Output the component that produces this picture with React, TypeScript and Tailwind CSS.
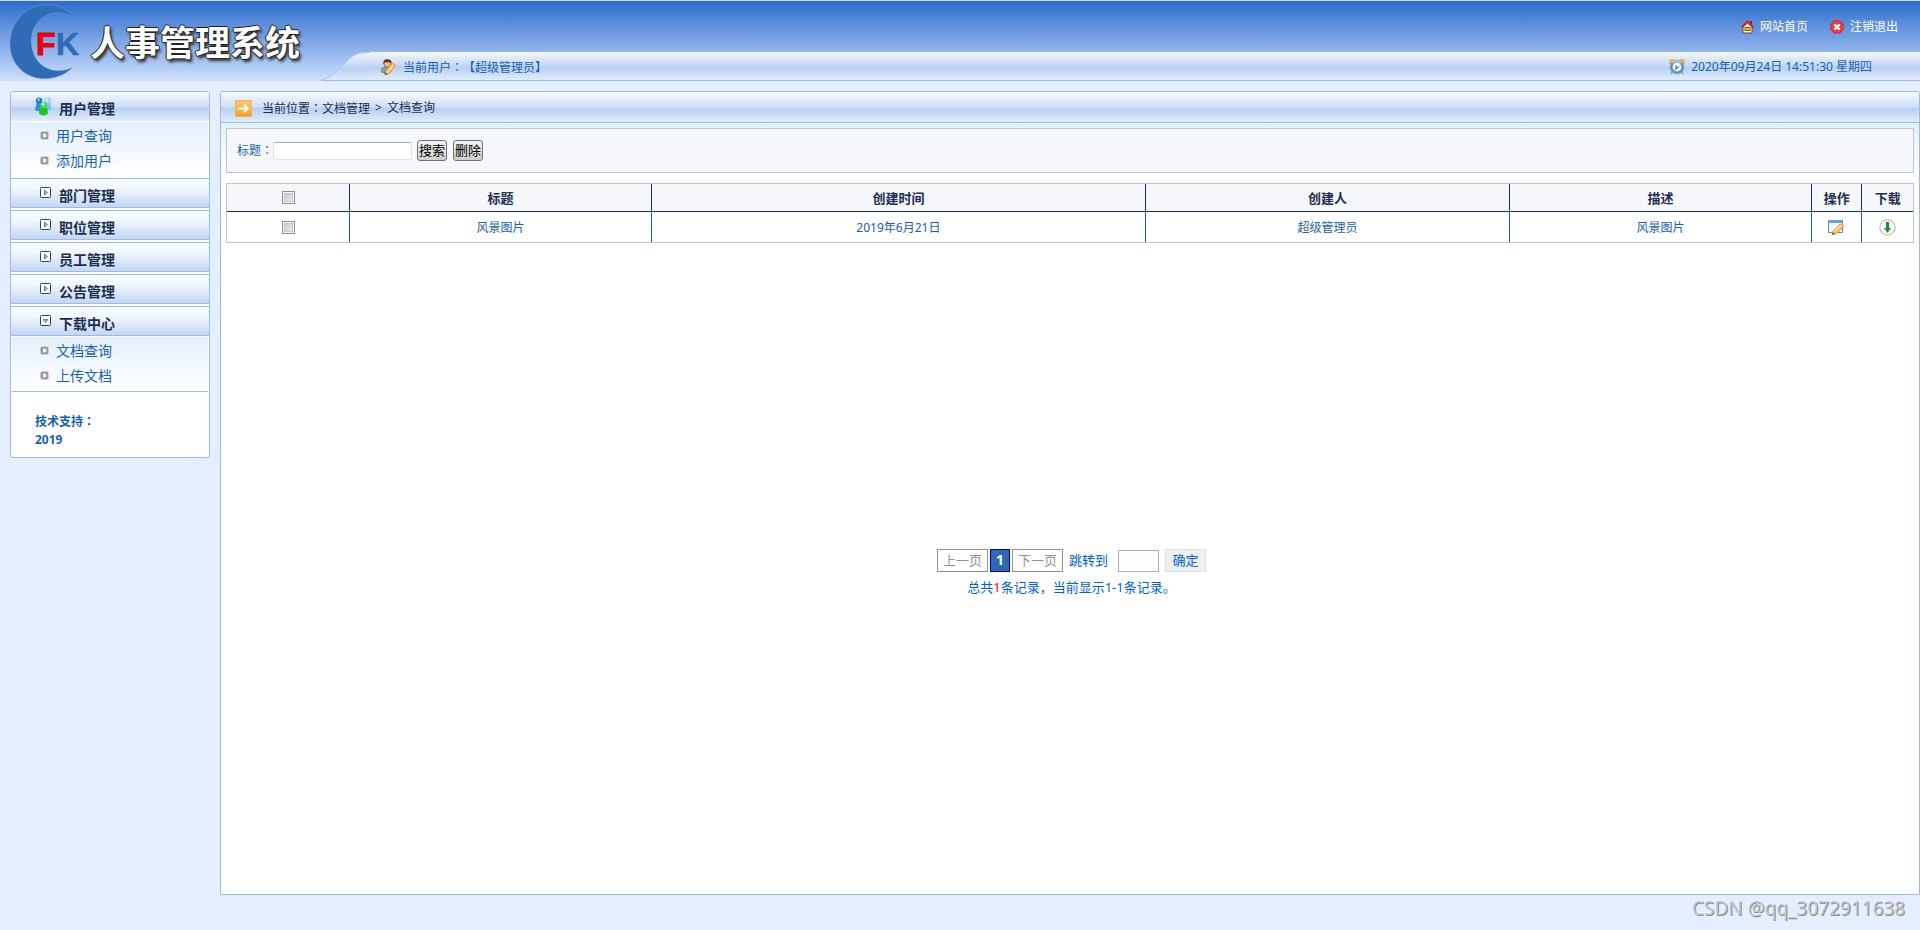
import { useState } from 'react';

interface MenuGroup {
  title: string;
  icon: 'users' | 'closed' | 'open';
  items: string[];
}

const MENU: MenuGroup[] = [
  { title: '用户管理', icon: 'users', items: ['用户查询', '添加用户'] },
  { title: '部门管理', icon: 'closed', items: [] },
  { title: '职位管理', icon: 'closed', items: [] },
  { title: '员工管理', icon: 'closed', items: [] },
  { title: '公告管理', icon: 'closed', items: [] },
  { title: '下载中心', icon: 'open', items: ['文档查询', '上传文档'] },
];

const COLUMNS = [
  { label: '标题', width: 'w-[17.9%]' },
  { label: '创建时间', width: 'w-[29.3%]' },
  { label: '创建人', width: 'w-[21.6%]' },
  { label: '描述', width: 'w-[17.9%]' },
  { label: '操作', width: 'w-[3%]' },
  { label: '下载', width: 'w-[3%]' },
];

const DOCUMENTS = [
  { id: 1, title: '风景图片', created: '2019年6月21日', author: '超级管理员', remark: '风景图片' },
];

const checkboxClass =
  'block mx-auto size-[13px] appearance-none border border-[#8e8f8f] bg-linear-to-br from-[#b8bec6] to-[#f6f6f6] shadow-[inset_0_0_0_1px_#f4f4f4,inset_0_0_0_2px_#c4c8cd] checked:from-[#1c5db3] checked:to-[#4a8be0]';

// Colon centred in its full-width box
function Colon() {
  return <span className="font-['Noto_Sans_CJK_TC',sans-serif]" lang="zh-TW">：</span>;
}

function Logo() {
  return (
    <svg width="84" height="80" viewBox="0 0 84 80" className="shrink-0">
      <path d="M74.500 16.500 C63 2 41 -0.500 26 10.500 C8 23 5 51 18 65.500 C31 82 58 81 72.500 66.500 C58 73 44 69 37 59 C28.500 47 29 29 40 18.500 C49 10.500 63 9 74.500 16.500 Z" fill="#2f6cb5" stroke="#6f9bd3" strokeWidth="0.500" />
      <text x="36" y="54" fontFamily="'Liberation Sans', sans-serif" fontWeight="700" fontSize="32" fill="#e60012" stroke="#e60012" strokeWidth="1">F</text>
      <text x="56" y="54" fontFamily="'Liberation Sans', sans-serif" fontWeight="700" fontSize="32" fill="#2f6cb5" stroke="#2f6cb5" strokeWidth="0.500">K</text>
    </svg>
  );
}

function HeaderCurve() {
  return (
    <svg width="50" height="29" viewBox="0 0 50 29" className="block shrink-0">
      <defs>
        <linearGradient id="curve" x1="0" y1="0" x2="0" y2="1">
          <stop offset="0" stopColor="#f4f8fe" />
          <stop offset="0.500" stopColor="#c3d7f3" />
          <stop offset="0.550" stopColor="#b8d0f1" />
          <stop offset="1" stopColor="#e0ecfd" />
        </linearGradient>
      </defs>
      <path d="M0 29 C10 27 16 20 27 9 C34 2 39 0 50 0 V29 Z" fill="url(#curve)" />
      <path d="M0 28.500 C10 27 16 20 27 9 C34 2 39 0.500 50 0.500" fill="none" stroke="#a9c4ec" />
      <path d="M3 28.500 H50" stroke="#9db9e6" />
    </svg>
  );
}

function UserIcon() {
  return (
    <svg width="16" height="16" viewBox="0 0 16 16" className="shrink-0">
      <path d="M1 10 L5 7 L9 9 L10 14 L4 14 Z" fill="#5ba5e8" stroke="#c8782a" strokeWidth="0.600" />
      <circle cx="7.500" cy="4.500" r="3.600" fill="#f3c08c" stroke="#a3581a" strokeWidth="0.800" />
      <path d="M3.500 5 C3 1 5 0.200 8 0.300 C11 0.500 12 2 11.300 4.500 C9.500 3.300 6.500 3 5 3.600 Z" fill="#6b3412" />
      <path d="M5 13 L12.500 4.500 L15.500 6.500 L9 14.500 L5.500 15 Z" fill="#fbd364" stroke="#d9892d" />
      <path d="M6.800 12.500 L13 6" stroke="#fff3b8" />
      <path d="M1 11.500 L3 14 M5 13 L5 15.500 L7.500 14.800" stroke="#8d4a17" fill="none" />
    </svg>
  );
}

function HouseIcon() {
  return (
    <svg width="13" height="14" viewBox="0 0 13 14" className="shrink-0">
      <path d="M9 1 H11 V5 H9 Z" fill="#6c2a20" />
      <path d="M2 7 L6.500 3 L11 7 V13 H2 Z" fill="#fdf8e4" stroke="#5a4a33" />
      <path d="M0.700 7.500 L6.500 1.500 L12.300 7.500" fill="none" stroke="#d5202a" strokeWidth="2" />
      <rect x="4" y="7.500" width="5" height="3" fill="#f5b921" stroke="#8a5c08" />
    </svg>
  );
}

function ExitIcon() {
  return (
    <svg width="14" height="14" viewBox="0 0 14 14" className="shrink-0">
      <path d="M4.200 0.500 H9.800 L13.500 4.200 V9.800 L9.800 13.500 H4.200 L0.500 9.800 V4.200 Z" fill="#e8141c" />
      <path d="M4.600 2 H9.400 L12 4.600 V9.400 L9.400 12 H4.600 L2 9.400 V4.600 Z" fill="#ee2a30" stroke="#f98080" strokeWidth="0.500" />
      <path d="M4.300 4.300 L9.700 9.700 M9.700 4.300 L4.300 9.700" stroke="#fff" strokeWidth="2.400" />
    </svg>
  );
}

function ClockIcon() {
  return (
    <svg width="16" height="16" viewBox="0 0 16 16" className="shrink-0">
      <path d="M3.500 13 L2 15 M12.500 13 L14 15" stroke="#9aa5ad" strokeWidth="2" />
      <circle cx="3" cy="3" r="2.500" fill="#fcc331" stroke="#e39a18" strokeWidth="0.700" />
      <circle cx="13" cy="3" r="2.500" fill="#fcc331" stroke="#e39a18" strokeWidth="0.700" />
      <circle cx="8" cy="8" r="5.800" fill="#f5fbff" stroke="#5f97c4" strokeWidth="2.800" />
      <path d="M3.500 4 A6 6 0 0 1 12.500 4" fill="none" stroke="#a6d0ea" strokeWidth="1.500" />
      <path d="M7 6 V10 L10 7.500" fill="none" stroke="#5c6e7c" strokeWidth="1.200" />
    </svg>
  );
}

function UsersIcon() {
  return (
    <svg width="17" height="19" viewBox="0 0 17 19" className="shrink-0">
      <path d="M9.500 6 H15.500 L16.500 12 C15 14 11 14 9 13 Z" fill="#7cc3ee" />
      <circle cx="12.600" cy="3.400" r="3" fill="#a9dbf7" stroke="#7fbfe6" strokeWidth="0.600" />
      <circle cx="12" cy="2.600" r="1.200" fill="#eefaff" />
      <path d="M1.500 6 H7 L8 13 C5 15 2 14 0 13 Z" fill="#2f8df0" />
      <circle cx="4" cy="3.600" r="3.200" fill="#1e7be8" />
      <circle cx="3.600" cy="2.800" r="1.300" fill="#a6d2fb" />
      <path d="M5 10 H12 L13 16.500 C10.500 19 6.500 19 4 16.500 Z" fill="#1fc51f" />
      <circle cx="8.500" cy="8.300" r="3.200" fill="#4fd64c" />
      <circle cx="8" cy="7.300" r="1.400" fill="#d4f9cb" />
    </svg>
  );
}

function ToggleIcon({ open }: { open: boolean }) {
  return (
    <svg width="11" height="11" viewBox="0 0 11 11" className="shrink-0">
      <rect x="0.500" y="0.500" width="10" height="10" rx="1" fill="#fff" stroke="#1d4477" />
      <path d={open ? 'M3 4.500 H8 L5.500 7.500 Z' : 'M4.500 3 V8 L7.500 5.500 Z'} fill="#8fb3e2" stroke="#4a76b8" strokeWidth="0.800" />
    </svg>
  );
}

function BulletIcon() {
  return (
    <svg width="9" height="9" viewBox="0 0 9 9" className="shrink-0">
      <rect x="0.500" y="0.500" width="8" height="8" rx="2" fill="#959595" stroke="#cfcfcf" />
      <path d="M3 2.500 H5 L6.500 3.500 V5.500 L5 6.500 H3 Z" fill="#fff" />
    </svg>
  );
}

function LocationIcon() {
  return (
    <svg width="17" height="17" viewBox="0 0 17 17" className="shrink-0">
      <defs>
        <linearGradient id="loc" x1="0" y1="0" x2="0" y2="1">
          <stop offset="0" stopColor="#f9c777" />
          <stop offset="1" stopColor="#f6a11f" />
        </linearGradient>
      </defs>
      <rect x="0.500" y="0.500" width="16" height="16" fill="url(#loc)" stroke="#f3b35a" />
      <path d="M3.500 8.500 H12 M9 4.800 L12.800 8.500 L9 12.200" fill="none" stroke="#fff" strokeWidth="2" />
    </svg>
  );
}

function EditIcon() {
  return (
    <svg width="17" height="16" viewBox="0 0 17 16" className="mx-auto block">
      <rect x="0.500" y="1.500" width="14" height="12" fill="#f3f8fe" stroke="#5b8ccb" />
      <rect x="0" y="1" width="15" height="3" fill="#6a9fe0" />
      <path d="M5 12.200 L12 5 L15.800 7 L8.800 14.600 L4.500 15.500 Z" fill="#f8c64c" stroke="#c98c2c" strokeWidth="0.800" />
      <path d="M7 12 L13 6" stroke="#fdeaa0" strokeWidth="1.200" />
      <path d="M13 4.600 L16.400 6.600 L15.400 7.800 L12 5.800 Z" fill="#efa896" />
      <path d="M4.300 15.700 L5 13.500 L6.600 15.200 Z" fill="#4a3520" />
    </svg>
  );
}

function DownloadIcon() {
  return (
    <svg width="17" height="17" viewBox="0 0 17 17" className="mx-auto block">
      <circle cx="8.500" cy="8.500" r="7.700" fill="#fff" stroke="#bdbdbd" strokeWidth="1.200" />
      <path d="M7 3 H10 V9 H12 L8.500 14 L5 9 H7 Z" fill="#1f8f2c" />
    </svg>
  );
}

function Header() {
  return (
    <header className="flex h-[81px] border-t border-[#d5dce4] bg-linear-to-b from-[#2a6bcd] to-[#cfe0fb]">
      <div className="flex w-[320px] shrink-0 items-start gap-[6px]">
        <Logo />
        <h1 className="mt-[17px] whitespace-nowrap text-[35px] leading-[50px] font-bold text-white [text-shadow:-1px_0_0_#222,1px_0_0_#222,0_-1px_0_#222,0_1px_0_#222,2px_3px_3px_#333]">
          人事管理系统
        </h1>
      </div>
      <div className="flex min-w-0 flex-1 flex-col">
        <nav className="flex h-[51px] items-center justify-end gap-[22px] pr-[22px] text-white">
          <a href="#home" className="flex items-center gap-[6px]"><HouseIcon />网站首页</a>
          <a href="#logout" className="flex items-center gap-[6px]"><ExitIcon />注销退出</a>
        </nav>
        <div className="flex h-[29px]">
          <HeaderCurve />
          <div className="flex flex-1 items-center justify-between border-b border-[#9db9e6] bg-[linear-gradient(to_bottom,#f4f8fe,#c3d7f3_50%,#b8d0f1_55%,#e0ecfd)] pl-[10px] pr-12 pt-[2px]">
            <span className="flex items-center gap-[7px]">
              <UserIcon />
              <span>当前用户<Colon />【超级管理员】</span>
            </span>
            <span className="flex items-center gap-[6px]"><ClockIcon />2020年09月24日 14:51:30 星期四</span>
          </div>
        </div>
      </div>
    </header>
  );
}

function Sidebar() {
  return (
    <aside className="w-[200px] shrink-0 overflow-hidden rounded-[3px] border border-[#9db9e6] bg-white text-sm">
      {MENU.map((group) => (
        <section key={group.title}>
          {group.icon === 'users' ? (
            <h2 className="flex h-[29px] items-center gap-[7px] bg-[linear-gradient(to_bottom,#f4f8fe,#cfdff5_50%,#b8d0f1_55%,#e0ecfd)] pl-6 font-bold text-[#1d2f50]">
              <UsersIcon />
              <span className="pt-1">{group.title}</span>
            </h2>
          ) : (
            <h2 className="flex h-[30px] items-start gap-2 border-y border-[#9db9e6] bg-linear-to-b from-[#f4f9ff] from-30% to-[#c4d6f2] pl-[29px] pt-2 font-bold text-[#1d2f50]">
              <ToggleIcon open={group.icon === 'open'} />
              <span className="pt-px leading-4">{group.title}</span>
            </h2>
          )}
          {group.items.length > 0 ? (
            <ul className={group.icon === 'open' ? 'border border-b-[#9db9e6] border-white bg-linear-to-b from-[#e3effe] to-white pt-px pb-[3px]' : 'border border-white bg-linear-to-b from-[#e3effe] to-white pt-px pb-1'}>
              {group.items.map((item) => (
                <li key={item}>
                  <a href="#menu" className="flex h-[25px] items-center gap-[7px] pl-[28px]"><BulletIcon />{item}</a>
                </li>
              ))}
            </ul>
          ) : (
            <div className="h-[2px]" />
          )}
        </section>
      ))}
      <div className="pt-5 pb-2 pl-6 text-xs leading-[18px] font-bold">
        技术支持<Colon />
        <br />
        2019
      </div>
    </aside>
  );
}

function SearchBar() {
  const buttonClass = 'h-[21px] w-[30px] whitespace-nowrap rounded-[3px] border border-[#707070] bg-linear-to-b from-[#f3f3f3] to-[#cfcfcf] text-[13px] leading-4 text-black pb-[2px]';

  return (
    <form className="flex h-[45px] items-center border border-[#c0c4ce] bg-[#f5f7fb] pl-[10px]" onSubmit={(e) => e.preventDefault()}>
      <label htmlFor="title">标题<Colon /></label>
      <input id="title" type="text" className="h-[18px] w-[139px] rounded-[2px] border border-[#dfe2e8] border-t-[#abadb3] bg-white px-1 text-xs outline-none" />
      <button type="submit" className={`ml-[5px] ${buttonClass}`}>搜索</button>
      <button type="button" className={`ml-[6px] ${buttonClass}`}>删除</button>
    </form>
  );
}

function DocumentTable() {
  const [selected, setSelected] = useState<number[]>([]);

  const toggle = (id: number) => {
    setSelected(selected.includes(id) ? selected.filter((s) => s !== id) : [...selected, id]);
  };

  return (
    <table className="w-full table-fixed border-separate border-spacing-0 border border-[#c0c4ce] text-center">
      <thead className="bg-[#f5f7fb] text-[13px] text-[#1d2f50]">
        <tr className="h-7">
          <th className="border-r border-b border-[#1d2f50]">
            <input type="checkbox" aria-label="全选" className={checkboxClass} checked={selected.length === DOCUMENTS.length} onChange={(e) => setSelected(e.target.checked ? DOCUMENTS.map((d) => d.id) : [])} />
          </th>
          {COLUMNS.map((c) => (
            <th key={c.label} className={`${c.width} border-r border-b border-[#1d2f50] leading-5 last:border-r-0`}>{c.label}</th>
          ))}
        </tr>
      </thead>
      <tbody className="bg-white">
        {DOCUMENTS.map((d) => (
          <tr key={d.id} className="h-[30px] *:border-r *:border-[#1760b4] *:last:border-r-0">
            <td>
              <input type="checkbox" aria-label={d.title} className={checkboxClass} checked={selected.includes(d.id)} onChange={() => toggle(d.id)} />
            </td>
            <td className="pt-[2px]">{d.title}</td>
            <td className="pt-[2px]">{d.created}</td>
            <td className="pt-[2px]">{d.author}</td>
            <td className="pt-[2px]">{d.remark}</td>
            <td><a href="#edit" aria-label="操作"><EditIcon /></a></td>
            <td><a href="#download" aria-label="下载"><DownloadIcon /></a></td>
          </tr>
        ))}
      </tbody>
    </table>
  );
}

function Pager() {
  return (
    <div className="pl-[3px] text-center text-[13px] leading-5 text-[#0061de]">
      <div className="flex items-center justify-center">
        <button type="button" disabled className="h-[23px] border border-[#929292] px-[5px] pb-[2px] text-[#929292]">上一页</button>
        <button type="button" className="ml-[2px] h-[23px] w-5 border border-[#000099] bg-[#2e6ab1] pb-[2px] text-[14px] font-bold text-white">1</button>
        <button type="button" disabled className="ml-[2px] h-[23px] border border-[#929292] px-[5px] pb-[2px] text-[#929292]">下一页</button>
        <label htmlFor="page" className="ml-[6px] pb-[2px]">跳转到</label>
        <input id="page" type="text" className="ml-[10px] h-[22px] w-[41px] border border-[#aaaadd] bg-white px-1 text-center outline-none" />
        <button type="button" className="ml-[6px] h-[23px] w-[41px] border border-[#dedfde] bg-[#efefef] pb-[2px]">确定</button>
      </div>
      <p className="mt-[5px]">
        总共<span className="text-[#ff0000]">1</span>条记录，当前显示1-1条记录。
      </p>
    </div>
  );
}

export default function App() {
  return (
    <div className="flex min-h-screen flex-col bg-[#e3effe] font-['Noto_Sans','Noto_Sans_CJK_SC',sans-serif] text-xs text-[#1760b4] [text-spacing-trim:space-all]">
      <Header />
      <div className="flex flex-1 items-start gap-[10px] pt-[10px] pl-[10px]">
        <Sidebar />
        <main className="flex min-w-0 flex-1 flex-col self-stretch overflow-hidden rounded-t-[3px] border border-[#9db9e6] bg-white">
          <div className="flex h-[31px] items-center gap-[10px] border-b border-[#9db9e6] bg-[linear-gradient(to_bottom,#f6faff,#cfdff5_50%,#b8d0f1_55%,#e0ecfd)] pl-[14px] pt-[2px] text-[#1d2f50]">
            <LocationIcon />
            <div className="flex gap-[5px]">
              <span>当前位置<Colon />文档管理</span>
              <span>&gt;</span>
              <span>文档查询</span>
            </div>
          </div>
          <div className="bg-linear-to-b from-[#e3effe] to-white to-[50px] px-[5px] pt-[5px]">
            <SearchBar />
            <div className="mt-[10px] min-h-[366px]">
              <DocumentTable />
            </div>
            <Pager />
          </div>
        </main>
      </div>
      <footer className="h-[35px] pr-[15px] text-right text-[19px] leading-[26px] text-[#c3c8cf] [text-shadow:1px_1px_0_#85898f,-1px_-1px_0_#f5f8fc]">
        CSDN @qq_3072911638
      </footer>
    </div>
  );
}
